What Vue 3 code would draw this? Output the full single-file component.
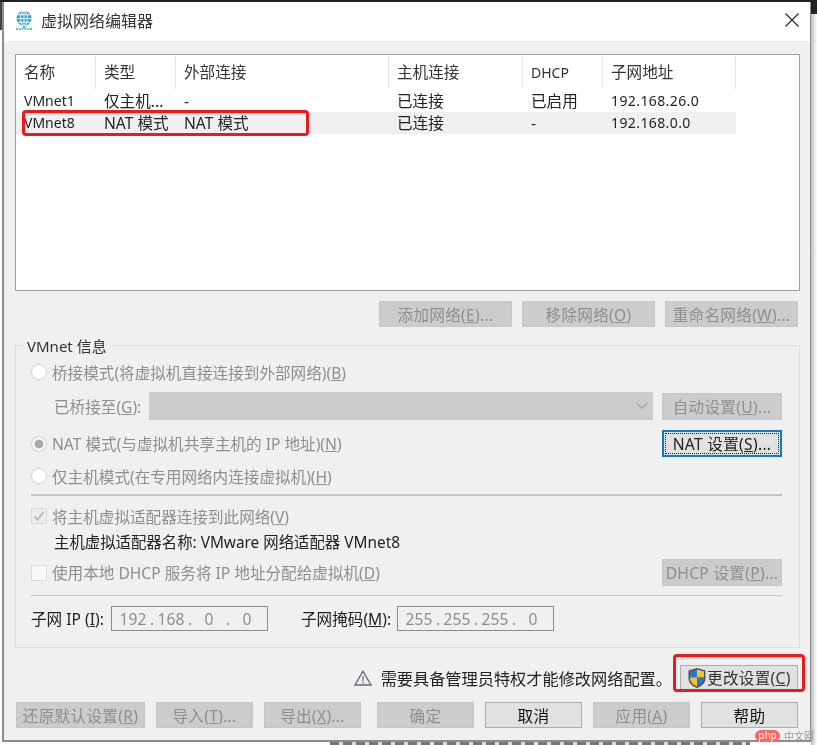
<template>
  <div class="screen">
    <div class="window">
      <header class="titlebar">
        <svg class="app-icon" width="20" height="21" viewBox="0 0 20 21">
          <circle cx="10" cy="8.5" r="7.5" fill="#2f9fe0" />
          <g fill="none" stroke="#d9f1fc" stroke-width="1.1">
            <ellipse cx="10" cy="8.5" rx="3.4" ry="7.5" />
            <path d="M2.5 8.5h15M3.6 4.6h12.8M3.6 12.4h12.8M10 1v15" />
          </g>
          <path d="M10 16v2" stroke="#39b89a" stroke-width="2" />
          <path d="M2 19h16" stroke="#58d0b0" stroke-width="2" stroke-dasharray="2 .8" />
        </svg>
        <span class="title">虚拟网络编辑器</span>
        <svg class="close" width="16" height="16" viewBox="0 0 16 16">
          <path d="M1.5 1.5l13 13M14.5 1.5l-13 13" stroke="#333" stroke-width="1.4" fill="none" />
        </svg>
      </header>

      <main class="content">
        <section class="list">
          <div class="list-row list-head">
            <div v-for="col in columns" :key="col" class="cell head-cell" :class="cellClass(col)">{{ col }}</div>
          </div>
          <div
            v-for="net in networks"
            :key="net.name"
            class="list-row"
            :class="{ selected: net.selected }"
          >
            <div v-for="(val, i) in net.values" :key="i" class="cell" :class="cellClass(val)">{{ val }}</div>
          </div>
        </section>

        <div class="list-actions">
          <button v-for="b in listButtons" :key="b.text" class="btn disabled list-btn">
            {{ b.text }}<u>{{ b.key }}</u>{{ b.tail }}
          </button>
        </div>

        <section class="group">
          <span class="legend">VMnet 信息</span>

          <div class="row r-bridge muted">
            <span class="radio"></span>
            <span>桥接模式(将虚拟机直接连接到外部网络)(<u>B</u>)</span>
          </div>

          <div class="row r-combo">
            <span class="combo-label muted">已桥接至(<u>G</u>):</span>
            <div class="combo">
              <svg width="14" height="8" viewBox="0 0 14 8">
                <path d="M1.5 1l5.5 5.5L12.5 1" stroke="#a5a5a5" stroke-width="1.2" fill="none" />
              </svg>
            </div>
            <button class="btn disabled side-btn">自动设置(<u>U</u>)...</button>
          </div>

          <div class="row r-nat muted">
            <span class="radio checked"></span>
            <span>NAT 模式(与虚拟机共享主机的 IP 地址)(<u>N</u>)</span>
            <button class="btn focused side-btn push">NAT 设置(<u>S</u>)...</button>
          </div>

          <div class="row r-host muted">
            <span class="radio"></span>
            <span>仅主机模式(在专用网络内连接虚拟机)(<u>H</u>)</span>
          </div>

          <div class="sep sep-thick"></div>

          <div class="row r-check muted">
            <span class="check">
              <svg width="14" height="14" viewBox="0 0 14 14">
                <path d="M2.5 7.5l3 3.2 6-7.5" stroke="#b4b4b4" stroke-width="1.6" fill="none" />
              </svg>
            </span>
            <span>将主机虚拟适配器连接到此网络(<u>V</u>)</span>
          </div>

          <div class="row r-adapter">主机虚拟适配器名称: VMware 网络适配器 VMnet8</div>

          <div class="row r-dhcp muted">
            <span class="check blank"></span>
            <span>使用本地 DHCP 服务将 IP 地址分配给虚拟机(<u>D</u>)</span>
            <button class="btn disabled side-btn push">DHCP 设置(<u>P</u>)...</button>
          </div>

          <div class="sep sep-thin"></div>

          <div class="row r-subnet">
            <span class="ip-label">子网 IP (<u>I</u>):</span>
            <div class="ip-input">
              <template v-for="(part, i) in subnetIp" :key="i">
                <span v-if="i" class="dot">.</span>
                <span class="octet">{{ part }}</span>
              </template>
            </div>
            <span class="ip-label mask-label">子网掩码(<u>M</u>):</span>
            <div class="ip-input">
              <template v-for="(part, i) in subnetMask" :key="i">
                <span v-if="i" class="dot">.</span>
                <span class="octet">{{ part }}</span>
              </template>
            </div>
          </div>
        </section>

        <div class="notice">
          <svg class="warn" width="18" height="16" viewBox="0 0 18 16">
            <path d="M9 1.2L1 15h16z" fill="none" stroke="#5f6b75" stroke-width="1.3" />
            <path d="M9 6v5M9 12v1.6" stroke="#5f6b75" stroke-width="1.2" />
          </svg>
          <span class="notice-text">需要具备管理员特权才能修改网络配置。</span>
          <button class="btn change-btn">
            <svg width="20" height="22" viewBox="0 0 20 22">
              <path d="M10 1L18.5 3.5V11c0 5-3.7 8.2-8.5 10C5.200 19.200 1.500 16 1.500 11V3.500z" fill="#4a5560" />
              <path d="M10 2.500L3 4.500V10.500h7z" fill="#2b78c8" />
              <path d="M10 2.500l7 2V10.500h-7z" fill="#f6c330" />
              <path d="M3 10.500h7v8.800C6 17.700 3 15 3 11z" fill="#f6c330" />
              <path d="M17 10.500h-7v8.800c4-1.600 7-4.300 7-8.300z" fill="#2b78c8" />
            </svg>
            <span>更改设置(<u>C</u>)</span>
          </button>
        </div>

        <div class="footer">
          <button
            v-for="b in footerButtons"
            :key="b.text"
            class="btn foot-btn"
            :class="{ disabled: b.disabled, wide: b.wide }"
          >
            {{ b.text }}<template v-if="b.key"><u>{{ b.key }}</u>{{ b.tail }}</template>
          </button>
        </div>
      </main>
    </div>

    <!-- annotations drawn on top of the screenshot -->
    <div class="mark mark-row"></div>
    <div class="mark mark-btn"></div>
    <div class="watermark">
      <span class="pill">php</span>
      <span class="wm-text">中文网</span>
    </div>
    <div class="under-text"></div>
  </div>
</template>

<script setup>
const columns = ["名称", "类型", "外部连接", "主机连接", "DHCP", "子网地址"];

const networks = [
  { name: "VMnet1", values: ["VMnet1", "仅主机...", "-", "已连接", "已启用", "192.168.26.0"] },
  { name: "VMnet8", selected: true, values: ["VMnet8", "NAT 模式", "NAT 模式", "已连接", "-", "192.168.0.0"] },
];

const listButtons = [
  { text: "添加网络(", key: "E", tail: ")..." },
  { text: "移除网络(", key: "O", tail: ")" },
  { text: "重命名网络(", key: "W", tail: ")..." },
];

const footerButtons = [
  { text: "还原默认设置(", key: "R", tail: ")", disabled: true, wide: true },
  { text: "导入(", key: "T", tail: ")...", disabled: true },
  { text: "导出(", key: "X", tail: ")...", disabled: true },
  { text: "确定", disabled: true },
  { text: "取消" },
  { text: "应用(", key: "A", tail: ")", disabled: true },
  { text: "帮助" },
];

const subnetIp = ["192", "168", "0", "0"];
const subnetMask = ["255", "255", "255", "0"];

// latin-only cells were narrower than the CJK ones in the original
function cellClass(val) {
  if (/^[\d.]+$/.test(val)) return "ip";
  return /^[A-Za-z0-9]+$/.test(val) ? "latin" : "";
}
</script>

<style scoped>
.screen {
  position: relative;
  width: 817px;
  height: 745px;
  overflow: hidden;
  background: linear-gradient(#222 0 2px, transparent 2px),
    linear-gradient(90deg, #444 0 2px, transparent 2px) 0 0 / 100% 30px no-repeat,
    linear-gradient(#222, #222) 811px 0 / 6px 14px no-repeat,
    linear-gradient(90deg, #bbb, #fff) 811px 14px / 6px 100% no-repeat,
    #fff;
  font-family: "Noto Sans", "Noto Sans CJK SC", sans-serif;
  font-size: 15.6px;
  color: #222;
  filter: blur(0.7px);
}

.window {
  box-sizing: border-box;
  width: 809px;
  height: 740px;
  margin-left: 2px;
  position: relative;
  top: 2px;
  display: flex;
  flex-direction: column;
  background: #f0f0f0;
  border: 1px solid #8c8c8c;
  border-top: 0;
  border-bottom-width: 2px;
  border-left-width: 2px;
}

.titlebar {
  box-sizing: border-box;
  flex: 0 0 39px;
  display: flex;
  align-items: center;
  background: #fff;
  padding: 0 0 3px 10px;
}

.app-icon {
  margin-right: 7px;
}

.title {
  color: #333;
  font-size: 16px;
}

.close {
  margin-left: auto;
  margin-right: 10px;
}

.content {
  flex: 1;
  padding: 13px 0 0 11px;
}

.list {
  box-sizing: border-box;
  width: 785px;
  height: 237px;
  background: #fff;
  border: 1px solid #9ea0a6;
  padding-top: 1px;
}

.list-row {
  display: grid;
  grid-template-columns: 80px 80px 213px 134px 80px 133px;
  height: 22px;
  line-height: 22px;
}

.list-head {
  height: 33px;
  line-height: 33px;
  margin-bottom: 1px;
}

.cell {
  padding-left: 8px;
  white-space: nowrap;
}

.latin {
  font-size: 14px;
}

.ip {
  font-size: 14px;
  letter-spacing: 0.4px;
}

.head-cell {
  border-right: 1px solid #e5e5e5;
  color: #333;
}

.selected {
  background: #f0f0f0;
  width: 720px;
}

.list-actions {
  display: flex;
  justify-content: flex-end;
  gap: 10px;
  width: 783px;
  margin-top: 10px;
}

.btn {
  box-sizing: border-box;
  padding: 0;
  font: inherit;
  white-space: nowrap;
  background: #e1e1e1;
  border: 1px solid #adadad;
  color: #111;
  letter-spacing: 0.3px;
}

.btn u {
  text-underline-offset: 1px;
}

.disabled {
  background: #cccccc;
  border-color: #c6c6c6;
  color: #8e8e8e;
}

.list-btn {
  width: 133px;
  height: 26px;
}

.group {
  position: relative;
  box-sizing: border-box;
  width: 785px;
  height: 303px;
  margin-top: 18px;
  padding: 15px 17px 0 15px;
  border: 1px solid #e0e0e0;
}

.legend {
  position: absolute;
  top: -9px;
  left: 8px;
  padding: 0 3px;
  line-height: 18px;
  font-size: 15px;
  background: #f0f0f0;
  color: #333;
}

.row {
  display: flex;
  align-items: center;
}

.muted {
  color: #8e8e8e;
}

.push {
  margin-left: auto;
}

.radio {
  box-sizing: border-box;
  flex: 0 0 16px;
  height: 16px;
  margin-right: 5px;
  border-radius: 50%;
  border: 1px solid #d4d4d4;
  background: #fff;
}

.radio.checked {
  background: radial-gradient(circle, #a8a8a8 0 4px, #f4f4f4 4.6px);
}

.check {
  box-sizing: border-box;
  flex: 0 0 16px;
  height: 16px;
  margin-right: 5px;
  display: flex;
  align-items: center;
  justify-content: center;
  background: #ececec;
  border: 1px solid #dadada;
}

.check.blank {
  background: #f8f8f8;
}

.r-bridge {
  height: 22px;
}

.r-combo {
  height: 28px;
  margin-top: 9px;
}

.combo-label {
  width: 95px;
  margin-left: 23px;
}

.combo {
  box-sizing: border-box;
  width: 504px;
  height: 28px;
  padding-right: 4px;
  display: flex;
  align-items: center;
  justify-content: flex-end;
  background: #cccccc;
}

.side-btn {
  width: 120px;
  height: 27px;
}

.r-combo .side-btn {
  margin-left: 9px;
}

.r-nat {
  height: 27px;
  margin-top: 10px;
}

.focused {
  border: 2px solid #0a78d7;
  outline: 1px dotted #222;
  outline-offset: -4px;
  color: #222;
}

.r-host {
  height: 22px;
  margin-top: 8px;
}

.sep {
  background: #c4c4c4;
}

.sep-thick {
  height: 2px;
  margin-top: 7px;
}

.r-check {
  height: 22px;
  margin-top: 9px;
}

.r-adapter {
  height: 22px;
  margin: 3px 0 0 23px;
  color: #222;
  font-size: 15.4px;
}

.r-dhcp {
  height: 27px;
  margin-top: 7px;
}

.sep-thin {
  height: 1px;
  margin-top: 9px;
}

.r-subnet {
  height: 25px;
  margin-top: 10px;
}

.ip-label {
  width: 80px;
  white-space: nowrap;
}

.mask-label {
  width: 96px;
  margin-left: 33px;
}

.ip-input {
  box-sizing: border-box;
  width: 157px;
  height: 25px;
  padding-left: 6px;
  display: flex;
  align-items: center;
  color: #8e8e8e;
  border: 1px solid #8c8c8c;
  background: #f0f0f0;
}

.octet {
  width: 30px;
  text-align: center;
}

.dot {
  width: 8px;
  text-align: center;
}

.notice {
  display: flex;
  align-items: center;
  justify-content: flex-end;
  width: 783px;
  height: 25px;
  margin-top: 17px;
}

.warn {
  margin-right: 9px;
}

.notice-text {
  margin-right: 8px;
  color: #222;
  font-size: 16.2px;
}

.change-btn {
  width: 118px;
  height: 25px;
  display: flex;
  align-items: center;
  padding-left: 6px;
  color: #333;
}

.footer {
  display: flex;
  width: 783px;
  height: 26px;
  margin-top: 12px;
}

.foot-btn {
  width: 97px;
  margin-left: 11px;
}

.foot-btn.wide {
  width: 129px;
  margin-left: 1px;
}

.foot-btn:nth-child(4) {
  margin-left: 16px;
}

.mark {
  position: absolute;
  box-sizing: border-box;
  border: 3px solid #f01818;
  border-radius: 4px;
}

.mark-row {
  left: 22px;
  top: 110px;
  width: 287px;
  height: 26px;
}

.mark-btn {
  left: 673px;
  top: 654px;
  width: 132px;
  height: 38px;
}

.watermark {
  position: absolute;
  left: 755px;
  top: 730px;
  height: 12px;
  display: flex;
  align-items: center;
  gap: 4px;
}

.pill {
  width: 25px;
  height: 12px;
  line-height: 11px;
  text-align: center;
  border-radius: 6px;
  background: #f06a6a;
  color: #fff;
  font-size: 10px;
}

.wm-text {
  line-height: 12px;
  font-size: 10px;
  color: #999;
}

/* tops of the page text that continues below the dialog */
.under-text {
  position: absolute;
  left: 330px;
  bottom: 0;
  width: 420px;
  height: 3px;
  background: repeating-linear-gradient(90deg, #777 0 9px, #ddd 9px 13px);
}
</style>
